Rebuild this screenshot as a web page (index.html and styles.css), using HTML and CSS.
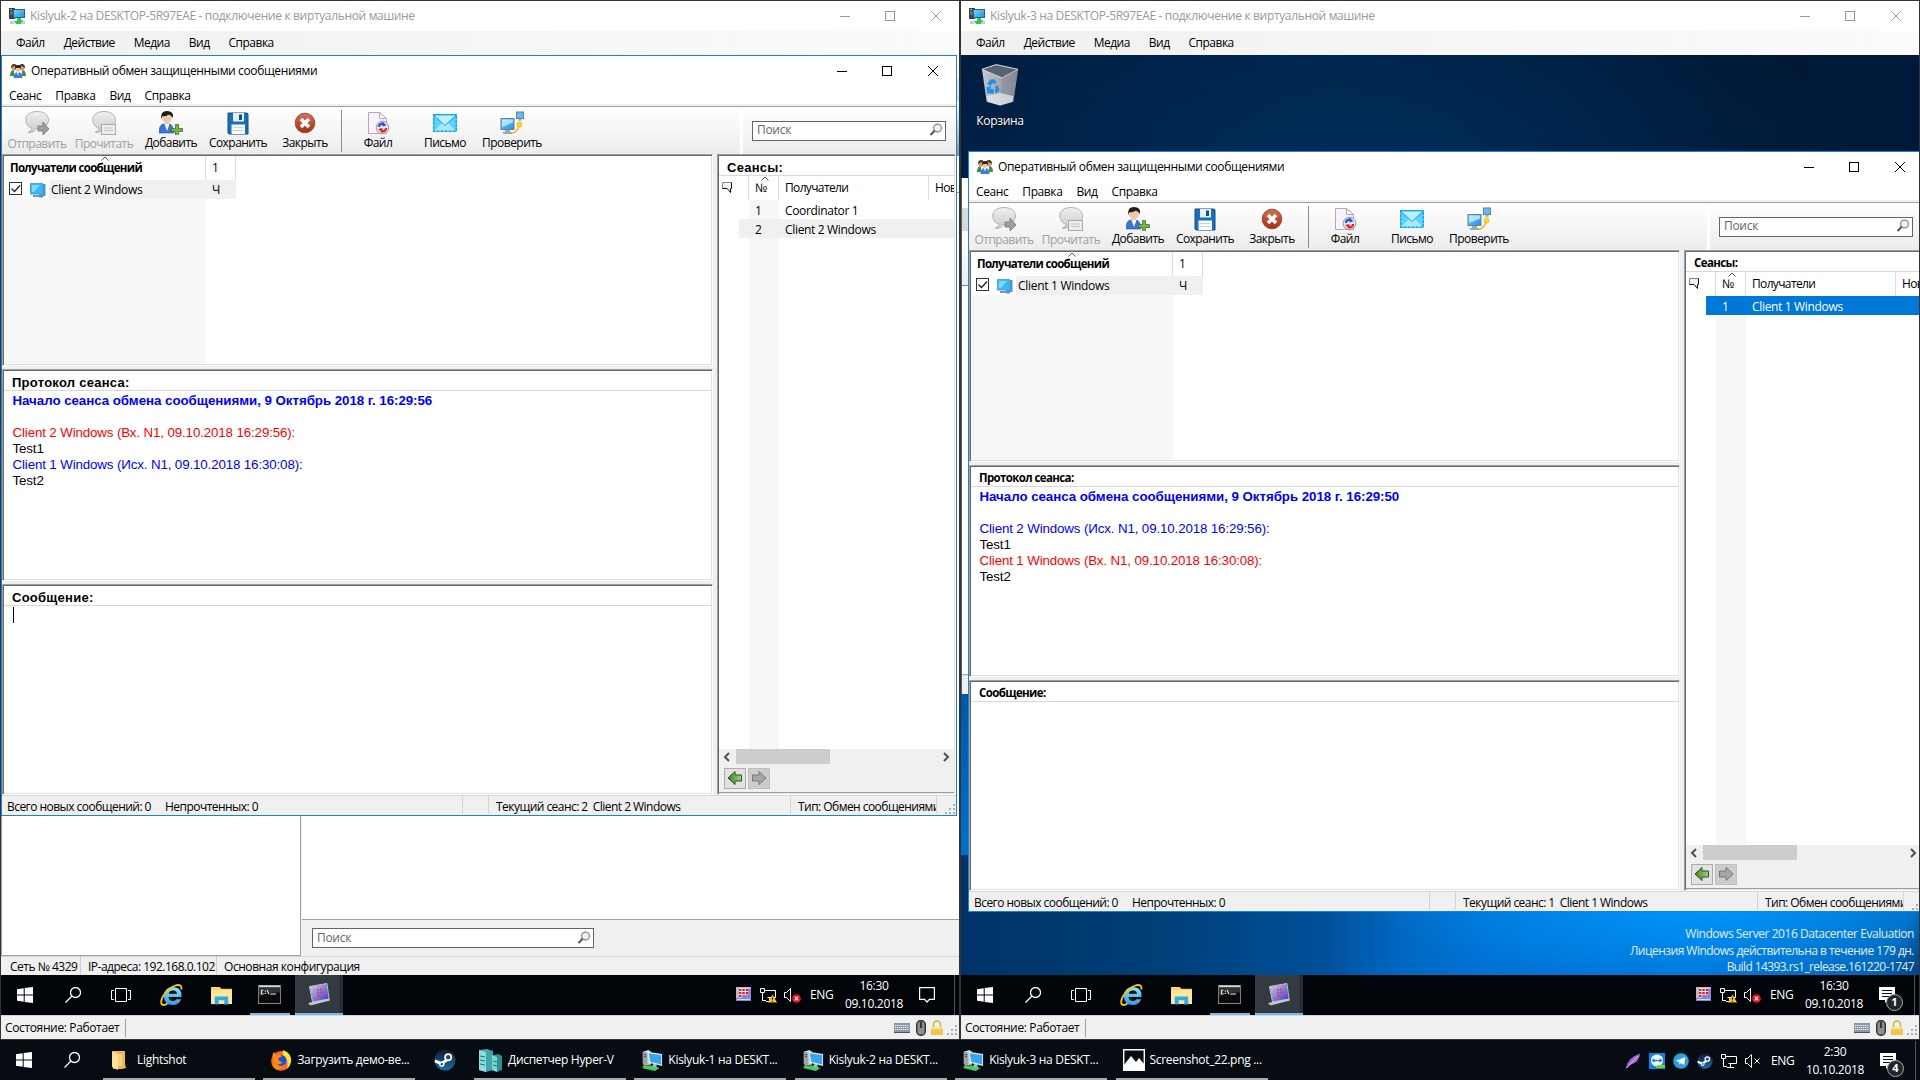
FILE: index.html
```html
<!DOCTYPE html>
<html lang="ru">
<head>
<meta charset="utf-8">
<title>Kislyuk-2, Kislyuk-3</title>
<link rel="stylesheet" href="styles.css">
</head>
<body>
<svg class="defs" aria-hidden="true">
  <defs>
    <linearGradient id="g-screen" x1="0" y1="0" x2="1" y2="1"><stop offset="0" stop-color="#7fd4fb"/><stop offset="1" stop-color="#1f8fdc"/></linearGradient>
    <linearGradient id="g-purple" x1="0" y1="0" x2="1" y2="1"><stop offset="0" stop-color="#d4d4ee"/><stop offset="1" stop-color="#3a2fc0"/></linearGradient>
    <linearGradient id="g-grey" x1="0" y1="0" x2="0" y2="1"><stop offset="0" stop-color="#f0f0f0"/><stop offset="1" stop-color="#c9c9c9"/></linearGradient>
    <linearGradient id="g-ie" x1="0" y1="0" x2="0" y2="1"><stop offset="0" stop-color="#8be0fb"/><stop offset="1" stop-color="#2b9fe0"/></linearGradient>
    <linearGradient id="g-fox" x1="0" y1="0" x2="1" y2="1"><stop offset="0" stop-color="#ff3b30"/><stop offset=".55" stop-color="#ff9500"/><stop offset="1" stop-color="#ff2a6d"/></linearGradient>
    <linearGradient id="g-steam" x1="0" y1="0" x2="0" y2="1"><stop offset="0" stop-color="#10182c"/><stop offset="1" stop-color="#1a6fae"/></linearGradient>
    <linearGradient id="g-red" x1="0" y1="0" x2="0" y2="1"><stop offset="0" stop-color="#d9705a"/><stop offset="1" stop-color="#a3300f"/></linearGradient>
    <linearGradient id="g-green" x1="0" y1="0" x2="1" y2="0"><stop offset="0" stop-color="#3f7f22"/><stop offset="1" stop-color="#a9d08c"/></linearGradient>
    <linearGradient id="g-bin" x1="0" y1="0" x2="1" y2="0"><stop offset="0" stop-color="#c3c9d0"/><stop offset=".6" stop-color="#9aa1aa"/><stop offset="1" stop-color="#6f7883"/></linearGradient>
  </defs>
  <symbol id="i-vm" viewBox="0 0 16 16"><rect x="0" y="0" width="6" height="11" fill="#39434c"/><rect x="1" y="1" width="2" height="1" fill="#5fe05f"/><path d="M1 4h4M1 6h4" stroke="#8b959c"/><rect x="4.500" y="1.500" width="11" height="8" fill="url(#g-screen)" stroke="#2a5f8c"/><path d="M8 10h4v2h2l-2 4H7l-2-3h3z" fill="#2fc552"/><path d="M1 13h4v3H1zM13 13h3v3h-3z" fill="#c7cbcf"/></symbol>
  <symbol id="i-vmbig" viewBox="0 0 24 24"><path d="M2 3l6-2 3 2v14l-7 1-2-2z" fill="#d3d6d8"/><path d="M2 3l5 1v14l-5-2z" fill="#9ca1a5"/><path d="M3.500 6l2 .5M3.500 8l2 .5" stroke="#333"/><path d="M2 18l12 0 6 3-5 3-13-3z" fill="#43d060"/><path d="M13 15l4 1v4h-4z" fill="#b0b7bb"/><path d="M7 3l16 2.500v13L9 15z" fill="#e4edf2"/><path d="M8.500 4.500l13.500 2v10.500L10 14z" fill="#35a7f2"/></symbol>
  <symbol id="i-people" viewBox="0 0 16 16"><path d="M0 13q0-6 4-6v6zM16 13q0-6-4-6v6z" fill="#3f8f45"/><circle cx="3.800" cy="4.800" r="2.600" fill="#d49a72"/><circle cx="12.200" cy="4.800" r="2.600" fill="#d49a72"/><path d="M1 5q0-4 3-4t3 3L4 3zM15 5q0-4-3-4T9 4l3-1z" fill="#4a3524"/><circle cx="8" cy="6" r="2.800" fill="#efc09c"/><path d="M5 6.500Q4.500 2 8 2t3 4.500L10 5H6z" fill="#2b2622"/><path d="M3.500 15q0-6 4.500-6t4.500 6z" fill="#3b7ddb"/><path d="M7 9h2l-1 4z" fill="#fff"/></symbol>
  <symbol id="i-send" viewBox="0 0 24 24"><path d="M12 .5C5 .500 .800 4 .800 8.500S3 16 7 17q0 3-4 4.500Q9 22 11 17.500C19 18 23.500 14 23.500 9S19 .500 12 .500z" fill="url(#g-grey)" stroke="#b2b2b2"/><path d="M13 15h5v-4l6 7-6 6v-4h-5z" fill="#9d9d9d" stroke="#858585"/></symbol>
  <symbol id="i-read" viewBox="0 0 24 24"><path d="M12 .5C5 .500 .800 4 .800 8.500S3 16 7 17q0 3-4 4.500Q9 22 11 17.500C19 18 23.500 14 23.500 9S19 .500 12 .500z" fill="url(#g-grey)" stroke="#b2b2b2"/><rect x="9.500" y="13.500" width="14" height="10" fill="#eee" stroke="#a9a9a9"/><path d="M12 17h9M12 19.500h9" stroke="#c4c4c4"/></symbol>
  <symbol id="i-add" viewBox="0 0 24 24"><path d="M0 22q0-9 5-9h5q4 0 5 9z" fill="#3c74d6" stroke="#2454a8" stroke-width=".6"/><path d="M5.500 13h5L8 20z" fill="#fff"/><circle cx="8" cy="7" r="4.800" fill="#f1c6a4"/><path d="M2.500 8Q1 0 8 0t6 7q-1-2-4-3.500Q6 6 3.500 5z" fill="#1e1c1e"/><path d="M16.500 13.500h3v4h4v3h-4v4h-3v-4h-4v-3h4z" fill="#78b44c" stroke="#3f7424" stroke-width=".8"/></symbol>
  <symbol id="i-save" viewBox="0 0 24 24"><path d="M2 2h19l1 1v20H3l-1-1z" fill="#1a70b8" stroke="#0c4d87"/><rect x="7" y="2" width="11" height="8.500" fill="#e2f2fa"/><rect x="13" y="3.500" width="3" height="5.500" fill="#164f86"/><rect x="5.500" y="13.500" width="13.500" height="9.500" fill="#f6fafc"/><path d="M7.500 16.500h9.500M7.500 19.500h9.500" stroke="#c2d4df"/></symbol>
  <symbol id="i-close" viewBox="0 0 24 24"><circle cx="12" cy="12" r="9.800" fill="url(#g-red)" stroke="#9a4a35"/><path d="M8 8l8 8M16 8l-8 8" stroke="#fff" stroke-width="3.600"/></symbol>
  <symbol id="i-file" viewBox="0 0 24 24"><path d="M2.500 1.500h11l7 6v15h-18z" fill="#f6f4f8" stroke="#b7a6bc"/><path d="M13.500 1.500v6h7z" fill="#fff" stroke="#b7a6bc"/><circle cx="16.500" cy="16.500" r="6.300" fill="#e9ecef" stroke="#8f9aa3"/><path d="M13 16q0-4 5-3" stroke="#1d56d6" stroke-width="2.400" fill="none"/><path d="M16.500 10.500v5l4-1z" fill="#1d56d6"/><path d="M20 17q0 4-5 3" stroke="#e3271d" stroke-width="2.400" fill="none"/><path d="M16.500 22v-5l-4.500 1z" fill="#e3271d"/></symbol>
  <symbol id="i-mail" viewBox="0 0 24 24"><rect x="0" y="3" width="24" height="18" fill="#5ed2fb"/><path d="M0 21l9-9h6l9 9z" fill="#a3e9ff"/><path d="M0 3.500h24L12 14.500z" fill="#bdf0ff" stroke="#159fe0"/><rect x=".7" y="3.700" width="22.600" height="16.600" fill="none" stroke="#12a6ee" stroke-width="1.400" stroke-dasharray="3 1"/></symbol>
  <symbol id="i-check" viewBox="0 0 24 24"><rect x="1" y="7.500" width="13" height="11" fill="url(#g-screen)" stroke="#64809a"/><path d="M2 8.500h11v3L2 16z" fill="#d7f1fd" opacity=".7"/><path d="M5 19h5v2h2v2H3v-2h2z" fill="#9aa9b6"/><rect x="16.500" y="1" width="7" height="6.500" fill="#66b8ef" stroke="#64809a"/><path d="M18 9h4M20 7.500v2" stroke="#8797a3"/><path d="M11 22.500q7-1 8-9" stroke="#f5b418" stroke-width="1.600" fill="none"/><circle cx="19.500" cy="13.500" r="2.500" fill="#ffd91a" stroke="#e0a010" stroke-width=".6"/></symbol>
  <symbol id="i-lens" viewBox="0 0 14 14"><circle cx="8.500" cy="5" r="3.900" fill="#eef3f6" stroke="#8a8a8a" stroke-width="1.300"/><path d="M5.600 7.800L1.500 12" stroke="#555" stroke-width="2"/></symbol>
  <symbol id="i-client" viewBox="0 0 16 16"><path d="M3 2h12.500v12H13v1.500H9V13z" fill="#4b93d5"/><rect x=".5" y="1.500" width="12" height="10.500" fill="#38b8f5" stroke="#4fa6d8"/><path d="M2 3h8L4 10H2z" fill="#7bd8fd"/><path d="M3 13h7v2H3z" fill="#6e9cc4"/></symbol>
  <symbol id="i-bubble" viewBox="0 0 12 12"><path d="M2 .5h8.500v6h-1v4l-3.500-4H1.500v-5z" fill="#f2f2f2" stroke="#111"/><path d="M1.500 6V1.500L2.500.5H10" stroke="#888" fill="none"/></symbol>
  <symbol id="i-caret" viewBox="0 0 8 5"><path d="M.5 4.500L4 1l3.500 3.500" stroke="#555" fill="none"/></symbol>
  <symbol id="i-sbl" viewBox="0 0 8 10"><path d="M6 1L2 5l4 4" stroke="#505050" stroke-width="2" fill="none"/></symbol>
  <symbol id="i-sbr" viewBox="0 0 8 10"><path d="M2 1l4 4-4 4" stroke="#505050" stroke-width="2" fill="none"/></symbol>
  <symbol id="i-prev" viewBox="0 0 16 16"><path d="M1 8l7-6.500V5h6.500v6H8v3.500z" fill="url(#g-green)" stroke="#285214"/></symbol>
  <symbol id="i-next" viewBox="0 0 16 16"><path d="M15 8L8 1.500V5H1.500v6H8v3.500z" fill="#a6a6a6" stroke="#787878"/></symbol>
  <symbol id="i-min" viewBox="0 0 12 12"><path d="M1 6.500h10" stroke="currentColor"/></symbol>
  <symbol id="i-max" viewBox="0 0 12 12"><rect x="1.500" y="1.500" width="9" height="9" stroke="currentColor" fill="none"/></symbol>
  <symbol id="i-x" viewBox="0 0 12 12"><path d="M1 1l10 10M11 1L1 11" stroke="currentColor"/></symbol>
  <symbol id="i-start" viewBox="0 0 16 16"><path d="M0 2.200L6.700 1.300V7.500H0zM7.700 1.100L16 0v7.500H7.700zM0 8.500h6.700v6.200L0 13.800zM7.700 8.500H16V16l-8.300-1.100z" fill="#fff"/></symbol>
  <symbol id="i-search" viewBox="0 0 16 16"><circle cx="10.500" cy="5.500" r="5" stroke="#fff" stroke-width="1.300" fill="none"/><path d="M7 9L.500 15.500" stroke="#fff" stroke-width="1.300"/></symbol>
  <symbol id="i-task" viewBox="0 0 20 14"><path d="M4.500.500h11v13h-11zM3 2.500H.500v9H3M17 2.500h2.500v9H17" stroke="#fff" fill="none" stroke-width="1"/></symbol>
  <symbol id="i-ie" viewBox="0 0 24 24"><path d="M21.500 14H8.500q.5 4 4.500 4 2.500 0 3.500-1.800h4.700Q19 22 12.800 22 4 22 4 13.500 4 4 13 4q9 0 8.500 10zM8.700 10.800h8.200Q16.500 7.600 13 7.600t-4.300 3.200z" fill="url(#g-ie)"/><path d="M21.500 6.500Q22 1 16.500 2.200C8 4.500 .5 14.500 1.300 20c.6 3 4 2 6.200.5" stroke="#f4c11c" stroke-width="1.900" fill="none"/></symbol>
  <symbol id="i-folder" viewBox="0 0 24 20"><path d="M1 1h9l2 2h11v16H1z" fill="#f6d36b"/><path d="M1 4.500h22V19H1z" fill="#ffe79a"/><path d="M5 11h14v8.500h-4V15H9v4.500H5z" fill="#2fa9ea"/></symbol>
  <symbol id="i-cmd" viewBox="0 0 24 20"><rect x=".5" y=".5" width="23" height="19" fill="#0a0a0a" stroke="#8b8b8b"/><path d="M1 1.500h22" stroke="#d9d9d9" stroke-width="2"/><path d="M1 3h22v5Q12 7 1 12z" fill="#333"/><path d="M5.500 5.500h-2v4h2M7.500 6v1M7.500 8.500v1M9.500 5l2 5M13 9.500h6" stroke="#fff" fill="none"/></symbol>
  <symbol id="i-vip" viewBox="0 0 24 24"><path d="M2.500 4.500L20 1.500 22 17 5.500 20z" fill="url(#g-purple)" stroke="#b9b9c9"/><path d="M1 21l21.500-4.500 .5 2L3.500 23.500z" fill="#c3c5cd"/><path d="M10 8l6-1M10 11l7-1M11 14l3-.5" stroke="#f0344a" stroke-width="1.600" stroke-dasharray="2 1"/></symbol>
  <symbol id="i-viptray" viewBox="0 0 15 14"><rect width="15" height="14" fill="#8d86d8"/><path d="M0 0h15v2H3v9H0z" fill="#b9b9cf"/><path d="M3 1.500h9v6H6v3H3z" fill="#fff"/><path d="M3 3h9M3 6h9M3 9h3" stroke="#f01818" stroke-width="2.200" stroke-dasharray="2.400 .9"/><path d="M1 12.500h13" stroke="#d7d7ec"/></symbol>
  <symbol id="i-net" viewBox="0 0 16 16"><path d="M4.500 3.500h11v7h-8M9.500 11v3M6 14.500h7M.500 1.500h4v4h-4zM2.500 5.500v8H6" stroke="#fff" fill="none"/></symbol>
  <symbol id="i-warn" viewBox="0 0 10 9"><path d="M5 0l5 9H0z" fill="#ffc20e"/><path d="M5 3v3M5 7v1" stroke="#222" stroke-width="1.200"/></symbol>
  <symbol id="i-snd" viewBox="0 0 16 16"><path d="M.500 5.500h2l4-4v13l-4-4h-2z" stroke="#fff" fill="none"/></symbol>
  <symbol id="i-redx" viewBox="0 0 10 10"><circle cx="5" cy="5" r="4.800" fill="#e81123"/><path d="M3 3l4 4M7 3L3 7" stroke="#fff" stroke-width="1.200"/></symbol>
  <symbol id="i-note" viewBox="0 0 16 16"><path d="M.600.600h14.800v11.800h-5L8 15l-2.400-2.600h-5z" stroke="#fff" stroke-width="1.200" fill="none"/></symbol>
  <symbol id="i-notef" viewBox="0 0 16 16"><path d="M0 0h16v13h-7L6 16v-3H0z" fill="#fff"/><path d="M3 3.500h10M3 6.500h10M3 9.500h7" stroke="#0b1018"/></symbol>
  <symbol id="i-kbd" viewBox="0 0 16 10"><rect width="16" height="10" fill="#8d9aa5"/><path d="M1 2.500h14M1 4.500h14M1 6.500h14" stroke="#e8eef2" stroke-dasharray="1.300 .7"/><path d="M0 9.500h16" stroke="#4a5560"/></symbol>
  <symbol id="i-mouse" viewBox="0 0 10 16"><rect x=".7" y=".7" width="8.600" height="14.600" rx="4" fill="#8f8f8f" stroke="#2e2e2e" stroke-width="1.400"/><path d="M5 2v6" stroke="#1d1d1d" stroke-width="1.600"/></symbol>
  <symbol id="i-lock" viewBox="0 0 12 15"><path d="M2.500 8V4.500a3.500 3.500 0 0 1 7 0V8" stroke="#d8b964" stroke-width="1.800" fill="none"/><rect y="7" width="12" height="8" fill="#f3c64d"/><path d="M0 8h12" stroke="#fbe39a" stroke-width="2"/></symbol>
  <symbol id="i-grip" viewBox="0 0 12 12"><path d="M9 1h2v2H9zM5 5h2v2H5zM9 5h2v2H9zM1 9h2v2H1zM5 9h2v2H5zM9 9h2v2H9z" fill="#b0b0b0"/></symbol>
  <symbol id="i-bin" viewBox="0 0 40 44"><path d="M1 5L16 0l23 5-5 34-14 4-14-4z" fill="url(#g-bin)"/><path d="M1 5L16 0l23 5-17 9z" fill="#59636f" stroke="#d9dee3"/><path d="M22 14l-2 29 14-4 5-34z" fill="#8a929d" opacity=".7"/><path d="M6 33l14-3 14 3-1 6-13 4-13-4z" fill="#e6e8ea" opacity=".75"/><path d="M7 20l3-4h4l2 3-3 1-1-1-2 3zM17 22l2 5-3 3-1-3 1-1-1-2zM6 24l1 6h6v-4H9l1-3z" fill="#1f8fe8" stroke="#1f8fe8" stroke-width=".8"/></symbol>
  <symbol id="i-fold2" viewBox="0 0 14 20"><path d="M1 1h12v13l1 4-4 1H1z" fill="#e9bb57"/><path d="M0 1l6 3v16l-6-3z" fill="#ffe096"/><path d="M6 4h4v12H6z" fill="#f6cf77"/></symbol>
  <symbol id="i-fox" viewBox="0 0 24 24"><circle cx="12" cy="13" r="10.800" fill="url(#g-fox)"/><path d="M14 1q10 3 9 13-1 5-5 8 4-10-4-15z" fill="#ffdf3a"/><circle cx="12" cy="12.500" r="6" fill="#1d4fd0"/><path d="M4 3l3 4q4-2 6 1l-4 2q0 4 5 4-4 5-9 1Q1 9 4 3z" fill="#ff8a16"/></symbol>
  <symbol id="i-steam" viewBox="0 0 24 24"><circle cx="12" cy="12" r="11.500" fill="url(#g-steam)"/><path d="M1 13l7 3 6-4" stroke="#fff" stroke-width="3.200" fill="none"/><circle cx="15.500" cy="9" r="4.300" fill="#fff"/><circle cx="15.500" cy="9" r="2.400" fill="#23456c"/><circle cx="8.500" cy="16.500" r="2.900" fill="#fff"/><circle cx="8.500" cy="16.500" r="1.400" fill="#2a6c9f"/></symbol>
  <symbol id="i-hv" viewBox="0 0 24 24"><path d="M0 2l8-1 6 2v19l-7 2-7-2z" fill="#3fa6ab"/><path d="M0 2l7 2v20l-7-2z" fill="#8fdcdf"/><path d="M14 7l5-1 4 2v14l-5 2-5-2z" fill="#2f8f96"/><path d="M13 7l5 2v15l-5-2z" fill="#7dd3d6"/><path d="M1 8l5 1M1 12l5 1M1 16l5 1M14 13l4 1M14 17l4 1" stroke="#1f7077"/></symbol>
  <symbol id="i-pic" viewBox="0 0 22 22"><path d="M.700.700h20.600v20.600H.700z" fill="#070b12" stroke="#fff" stroke-width="1.400"/><path d="M1 16l7-9 5 6 3-4 5 6v6H1z" fill="#fff"/></symbol>
  <symbol id="i-quill" viewBox="0 0 16 16"><path d="M1 15Q2 5 15 .500 15 9 5 12z" fill="#a05fd0"/><path d="M1 15.500L13 3" stroke="#e3c8f7" fill="none"/></symbol>
  <symbol id="i-tv" viewBox="0 0 16 16"><rect width="16" height="16" fill="#1283e6"/><circle cx="8" cy="7.500" r="6" fill="#fff"/><path d="M2.500 7.500L5.500 5v1.700h5V5l3 2.500-3 2.500V8.300h-5V10z" fill="#1283e6"/><path d="M8 12h8v3H7z" fill="#7ed321"/></symbol>
  <symbol id="i-tg" viewBox="0 0 16 16"><circle cx="8" cy="8" r="7.800" fill="#2ca3dd"/><path d="M3 7.800L12.500 4 11 12 8 10l-1.500 1.500L6 9z" fill="#fff"/></symbol>
</svg>

<div class="screen">
  <main class="vms">

    <section class="vm">
      <header class="vm-title"><svg class="s16"><use href="#i-vm"/></svg><span class="vm-name">Kislyuk-2 на DESKTOP-5R97EAE - подключение к виртуальной машине</span><span class="caption"><svg><use href="#i-min"/></svg><svg class="mx"><use href="#i-max"/></svg><svg><use href="#i-x"/></svg></span></header>
      <nav class="vm-menu"><span>Файл</span><span>Действие</span><span>Медиа</span><span>Вид</span><span>Справка</span></nav>
      <div class="desktop monitor">
        <div class="mon-main">
          <div class="mon-tree"></div>
          <div class="mon-right">
            <div class="mon-list"></div>
            <div class="mon-find"><div class="search wide"><span>Поиск</span><svg><use href="#i-lens"/></svg></div></div>
          </div>
        </div>
        <div class="mon-status"><span class="n1">Сеть № 4329</span><span class="n2">IP-адреса: 192.168.0.102</span><span class="n3">Основная конфигурация</span></div>

        <article class="app app-left">
          <header class="app-title"><svg class="s16"><use href="#i-people"/></svg><span class="app-name">Оперативный обмен защищенными сообщениями</span><span class="caption"><svg><use href="#i-min"/></svg><svg class="mx"><use href="#i-max"/></svg><svg><use href="#i-x"/></svg></span></header>
          <nav class="app-menu"><span>Сеанс</span><span>Правка</span><span>Вид</span><span>Справка</span></nav>
          <div class="toolbar">
            <div class="tools">
              <div class="tool off"><svg><use href="#i-send"/></svg><span>Отправить</span></div>
              <div class="tool off"><svg><use href="#i-read"/></svg><span>Прочитать</span></div>
              <div class="tool"><svg><use href="#i-add"/></svg><span>Добавить</span></div>
              <div class="tool"><svg><use href="#i-save"/></svg><span>Сохранить</span></div>
              <div class="tool"><svg><use href="#i-close"/></svg><span>Закрыть</span></div>
              <i class="tool-sep"></i>
              <div class="tool"><svg><use href="#i-file"/></svg><span>Файл</span></div>
              <div class="tool"><svg><use href="#i-mail"/></svg><span>Письмо</span></div>
              <div class="tool"><svg><use href="#i-check"/></svg><span>Проверить</span></div>
            </div>
            <div class="find"><div class="search"><span>Поиск</span><svg><use href="#i-lens"/></svg></div></div>
          </div>
          <div class="panes">
            <div class="col-left">
              <section class="box recipients">
                <div class="rc-head"><span class="rc-name">Получатели сообщений<svg class="caret"><use href="#i-caret"/></svg></span><span class="rc-num">1</span></div>
                <div class="rc-row"><span class="chk"><svg viewBox="0 0 13 13"><path d="M2.500 6.500l3 3 5.500-6" stroke="#222" stroke-width="1.300" fill="none"/></svg></span><svg class="s16"><use href="#i-client"/></svg><span class="rc-client">Client 2 Windows</span><span class="rc-flag">Ч</span></div>
                <div class="rc-fill"></div>
              </section>
              <section class="box log">
                <h2>Протокол сеанса:</h2>
                <p class="start">Начало сеанса обмена сообщениями, 9 Октябрь 2018 г. 16:29:56</p>
                <p>&nbsp;</p>
                <p class="in">Client 2 Windows (Вх. N1, 09.10.2018 16:29:56):</p>
                <p>Test1</p>
                <p class="out">Client 1 Windows (Исх. N1, 09.10.2018 16:30:08):</p>
                <p>Test2</p>
              </section>
              <section class="box message">
                <h2>Сообщение:</h2>
                <i class="cursor"></i>
              </section>
            </div>
            <section class="box sessions">
              <h2>Сеансы:</h2>
              <div class="ss-head"><span class="c0"><svg><use href="#i-bubble"/></svg></span><span class="c1">№<svg class="caret"><use href="#i-caret"/></svg></span><span class="c2">Получатели</span><span class="c3">Новых</span></div>
              <div class="ss-list">
                <div class="ss-row"><span>1</span><span>Coordinator 1</span></div>
                <div class="ss-row cur"><span>2</span><span>Client 2 Windows</span></div>
              </div>
              <div class="hscroll"><svg><use href="#i-sbl"/></svg><i class="thumb"></i><svg class="end"><use href="#i-sbr"/></svg></div>
              <div class="pager"><span class="pg"><svg class="s16"><use href="#i-prev"/></svg></span><span class="pg dis"><svg class="s16"><use href="#i-next"/></svg></span></div>
            </section>
          </div>
          <footer class="app-status"><span class="a1">Всего новых сообщений: 0</span><span class="a2">Непрочтенных: 0</span><span class="a3"></span><span class="a4">Текущий сеанс: 2&nbsp; Client 2 Windows</span><span class="a5">Тип: Обмен сообщениями</span><svg class="grip"><use href="#i-grip"/></svg></footer>
        </article>
      </div>
      <div class="taskbar guest">
        <span class="tb"><svg class="s16"><use href="#i-start"/></svg></span><span class="tb"><svg class="s16"><use href="#i-search"/></svg></span><span class="tb"><svg class="tv"><use href="#i-task"/></svg></span><span class="tb ie"><svg class="s24"><use href="#i-ie"/></svg></span><span class="tb ex"><svg class="w22"><use href="#i-folder"/></svg></span><span class="tb run"><svg class="w22"><use href="#i-cmd"/></svg></span><span class="tb act"><svg class="s24"><use href="#i-vip"/></svg></span>
        <div class="tray"><svg class="viptray"><use href="#i-viptray"/></svg><span class="ov"><svg class="s16"><use href="#i-net"/></svg><svg class="badge"><use href="#i-warn"/></svg></span><span class="ov"><svg class="s16"><use href="#i-snd"/></svg><svg class="badge"><use href="#i-redx"/></svg></span><span class="lang">ENG</span><span class="clock">16:30<br>09.10.2018</span><span class="ov nt"><svg class="s16"><use href="#i-note"/></svg></span><i class="peek"></i></div>
      </div>
      <footer class="vm-status"><span>Состояние: Работает</span><div class="vm-icons"><svg class="kbd"><use href="#i-kbd"/></svg><svg class="mouse"><use href="#i-mouse"/></svg><svg class="lock"><use href="#i-lock"/></svg><svg class="grip"><use href="#i-grip"/></svg></div></footer>
    </section>

    <section class="vm">
      <header class="vm-title"><svg class="s16"><use href="#i-vm"/></svg><span class="vm-name">Kislyuk-3 на DESKTOP-5R97EAE - подключение к виртуальной машине</span><span class="caption"><svg><use href="#i-min"/></svg><svg class="mx"><use href="#i-max"/></svg><svg><use href="#i-x"/></svg></span></header>
      <nav class="vm-menu"><span>Файл</span><span>Действие</span><span>Медиа</span><span>Вид</span><span>Справка</span></nav>
      <div class="desktop wallpaper">
        <div class="bin"><svg><use href="#i-bin"/></svg><span>Корзина</span></div>
        <div class="behind"></div>
        <div class="watermark"><span class="w1">Windows Server 2016 Datacenter Evaluation</span><span class="w2">Лицензия Windows действительна в течение 179 дн.</span><span class="w3">Build 14393.rs1_release.161220-1747</span></div>

        <article class="app app-right">
          <header class="app-title"><svg class="s16"><use href="#i-people"/></svg><span class="app-name">Оперативный обмен защищенными сообщениями</span><span class="caption"><svg><use href="#i-min"/></svg><svg class="mx"><use href="#i-max"/></svg><svg><use href="#i-x"/></svg></span></header>
          <nav class="app-menu"><span>Сеанс</span><span>Правка</span><span>Вид</span><span>Справка</span></nav>
          <div class="toolbar">
            <div class="tools">
              <div class="tool off"><svg><use href="#i-send"/></svg><span>Отправить</span></div>
              <div class="tool off"><svg><use href="#i-read"/></svg><span>Прочитать</span></div>
              <div class="tool"><svg><use href="#i-add"/></svg><span>Добавить</span></div>
              <div class="tool"><svg><use href="#i-save"/></svg><span>Сохранить</span></div>
              <div class="tool"><svg><use href="#i-close"/></svg><span>Закрыть</span></div>
              <i class="tool-sep"></i>
              <div class="tool"><svg><use href="#i-file"/></svg><span>Файл</span></div>
              <div class="tool"><svg><use href="#i-mail"/></svg><span>Письмо</span></div>
              <div class="tool"><svg><use href="#i-check"/></svg><span>Проверить</span></div>
            </div>
            <div class="find"><div class="search"><span>Поиск</span><svg><use href="#i-lens"/></svg></div></div>
          </div>
          <div class="panes">
            <div class="col-left">
              <section class="box recipients">
                <div class="rc-head"><span class="rc-name">Получатели сообщений<svg class="caret"><use href="#i-caret"/></svg></span><span class="rc-num">1</span></div>
                <div class="rc-row"><span class="chk"><svg viewBox="0 0 13 13"><path d="M2.500 6.500l3 3 5.500-6" stroke="#222" stroke-width="1.300" fill="none"/></svg></span><svg class="s16"><use href="#i-client"/></svg><span class="rc-client">Client 1 Windows</span><span class="rc-flag">Ч</span></div>
                <div class="rc-fill"></div>
              </section>
              <section class="box log">
                <h2>Протокол сеанса:</h2>
                <p class="start">Начало сеанса обмена сообщениями, 9 Октябрь 2018 г. 16:29:50</p>
                <p>&nbsp;</p>
                <p class="out">Client 2 Windows (Исх. N1, 09.10.2018 16:29:56):</p>
                <p>Test1</p>
                <p class="in">Client 1 Windows (Вх. N1, 09.10.2018 16:30:08):</p>
                <p>Test2</p>
              </section>
              <section class="box message">
                <h2>Сообщение:</h2>
              </section>
            </div>
            <section class="box sessions">
              <h2>Сеансы:</h2>
              <div class="ss-head"><span class="c0"><svg><use href="#i-bubble"/></svg></span><span class="c1">№<svg class="caret"><use href="#i-caret"/></svg></span><span class="c2">Получатели</span><span class="c3">Новых</span></div>
              <div class="ss-list">
                <div class="ss-row sel"><span>1</span><span>Client 1 Windows</span></div>
              </div>
              <div class="hscroll"><svg><use href="#i-sbl"/></svg><i class="thumb"></i><svg class="end"><use href="#i-sbr"/></svg></div>
              <div class="pager"><span class="pg"><svg class="s16"><use href="#i-prev"/></svg></span><span class="pg dis"><svg class="s16"><use href="#i-next"/></svg></span></div>
            </section>
          </div>
          <footer class="app-status"><span class="a1">Всего новых сообщений: 0</span><span class="a2">Непрочтенных: 0</span><span class="a3"></span><span class="a4">Текущий сеанс: 1&nbsp; Client 1 Windows</span><span class="a5">Тип: Обмен сообщениями</span><svg class="grip"><use href="#i-grip"/></svg></footer>
        </article>
      </div>
      <div class="taskbar guest">
        <span class="tb"><svg class="s16"><use href="#i-start"/></svg></span><span class="tb"><svg class="s16"><use href="#i-search"/></svg></span><span class="tb"><svg class="tv"><use href="#i-task"/></svg></span><span class="tb ie"><svg class="s24"><use href="#i-ie"/></svg></span><span class="tb ex"><svg class="w22"><use href="#i-folder"/></svg></span><span class="tb run"><svg class="w22"><use href="#i-cmd"/></svg></span><span class="tb act"><svg class="s24"><use href="#i-vip"/></svg></span>
        <div class="tray"><svg class="viptray"><use href="#i-viptray"/></svg><span class="ov"><svg class="s16"><use href="#i-net"/></svg><svg class="badge"><use href="#i-warn"/></svg></span><span class="ov"><svg class="s16"><use href="#i-snd"/></svg><svg class="badge"><use href="#i-redx"/></svg></span><span class="lang">ENG</span><span class="clock">16:30<br>09.10.2018</span><span class="ov nt"><svg class="s16"><use href="#i-notef"/></svg><b class="count">1</b></span><i class="peek"></i></div>
      </div>
      <footer class="vm-status"><span>Состояние: Работает</span><div class="vm-icons"><svg class="kbd"><use href="#i-kbd"/></svg><svg class="mouse"><use href="#i-mouse"/></svg><svg class="lock"><use href="#i-lock"/></svg><svg class="grip"><use href="#i-grip"/></svg></div></footer>
    </section>
  </main>

  <div class="taskbar host">
    <span class="tb"><svg class="s16"><use href="#i-start"/></svg></span><span class="tb"><svg class="s16"><use href="#i-search"/></svg></span>
    <div class="tasks">
      <div class="task t-folder"><svg><use href="#i-fold2"/></svg><span>Lightshot</span></div>
      <div class="task"><svg><use href="#i-fox"/></svg><span>Загрузить демо-ве...</span></div>
      <div class="pin"><svg><use href="#i-steam"/></svg></div>
      <div class="task hv"><svg><use href="#i-hv"/></svg><span>Диспетчер Hyper-V</span></div>
      <div class="task"><svg><use href="#i-vmbig"/></svg><span>Kislyuk-1 на DESKT...</span></div>
      <div class="task"><svg><use href="#i-vmbig"/></svg><span>Kislyuk-2 на DESKT...</span></div>
      <div class="task"><svg><use href="#i-vmbig"/></svg><span>Kislyuk-3 на DESKT...</span></div>
      <div class="task"><svg><use href="#i-pic"/></svg><span>Screenshot_22.png ...</span></div>
    </div>
    <div class="tray"><svg class="s16"><use href="#i-quill"/></svg><svg class="s16"><use href="#i-tv"/></svg><svg class="s16"><use href="#i-tg"/></svg><svg class="s16"><use href="#i-steam"/></svg><svg class="s16"><use href="#i-net"/></svg><span class="ov"><svg class="s16"><use href="#i-snd"/></svg><svg class="mute" viewBox="0 0 6 6"><path d="M.500.500l5 5M5.500.500l-5 5" stroke="#fff"/></svg></span><span class="lang">ENG</span><span class="clock">2:30<br>10.10.2018</span><span class="ov nt"><svg class="s16"><use href="#i-notef"/></svg><b class="count">4</b></span><i class="peek"></i></div>
  </div>
</div>
</body>
</html>
```
FILE: styles.css
```css
* { box-sizing: border-box; }
html, body { margin: 0; height: 100%; }
body {
  font: 12px/16px "Open Sans", "Noto Sans", sans-serif;
  letter-spacing: -0.3px;
  color: #000;
  background: #070b12;
  overflow: hidden;
}
svg { display: block; flex: none; }
h2, p { margin: 0; }
.defs { position: absolute; width: 0; height: 0; }
.s16 { width: 16px; height: 16px; }
.s24 { width: 24px; height: 24px; }
.w22 { width: 23px; height: 19px; }
.tv { width: 20px; height: 14px; }

.screen { width: 1920px; height: 1080px; display: flex; flex-direction: column; }
.vms { display: flex; height: 1040px; }

/* Virtual machine window */
.vm { width: 960px; height: 1040px; border: 1px solid #333338; display: flex; flex-direction: column; background: #fff; overflow: hidden; }
.vm-title { height: 30px; display: flex; align-items: center; gap: 5px; padding: 0 17px 0 8px; color: #999; }
.vm-name { letter-spacing: -0.34px; white-space: nowrap; }
.caption { margin-left: auto; display: flex; gap: 34px; }
.caption svg { width: 12px; height: 12px; }
.caption .mx { margin-left: -1px; }
.vm-menu { height: 24px; display: flex; align-items: center; gap: 19px; padding-left: 15px; letter-spacing: -0.52px; background: linear-gradient(90deg, #f0f0f0, #fbfbfb); }
.desktop { height: 920px; position: relative; overflow: hidden; }
.vm-status { height: 24px; display: flex; align-items: center; justify-content: space-between; background: #f0f0f0; border-top: 1px solid #d7d7d7; padding: 0 1px 0 4px; letter-spacing: -0.36px; }
.vm-status > span { height: 18px; line-height: 18px; padding-right: 6px; border-right: 1px solid #a0a0a0; }
.vm-icons { display: flex; align-items: center; gap: 5px; }
.kbd { width: 16px; height: 10px; }
.mouse { width: 10px; height: 16px; margin-left: 1px; }
.lock { width: 12px; height: 15px; }
.grip { width: 12px; height: 12px; }
.vm-icons .grip { align-self: flex-end; margin-left: -2px; }

/* Monitor window in the first guest */
.monitor { display: flex; flex-direction: column; background: #fff; }
.mon-main { flex: 1; display: flex; background: linear-gradient(180deg, #fff 24px, #e2e2e2 24px, #e2e2e2 46px, #fff 46px, #909090 101px, #fff 101px, #fff 137px, #999 137px, #999 138px, #fff 138px); }
.mon-tree { width: 300px; border-right: 1px solid #a0a0a0; border-bottom: 1px solid #a0a0a0; border-left: 1px solid #a0a0a0; }
.mon-right { flex: 1; display: flex; flex-direction: column; border-left: 1px solid #f0f0f0; }
.mon-list { flex: 1; border-bottom: 1px solid #a0a0a0; }
.mon-find { height: 36px; background: #f0f0f0; padding: 8px 0 0 10px; }
.mon-status { height: 19px; display: flex; background: #f0f0f0; border-top: 1px solid #d7d7d7; padding-left: 9px; line-height: 20px; letter-spacing: -0.5px; white-space: nowrap; }
.mon-status span { border-right: 1px solid #d0d0d0; margin-right: 7px; }
.n1 { width: 71px; }
.n2 { width: 129px; }
.mon-status .n3 { border: 0; letter-spacing: -0.44px; }
.search { width: 194px; height: 20px; display: flex; align-items: center; justify-content: space-between; border: 1px solid #646464; background: #fff; color: #666; padding: 0 2px 2px 4px; letter-spacing: -0.3px; }
.search svg { width: 14px; height: 14px; }
.search.wide { width: 282px; padding-bottom: 0; }

/* Messenger window */
.app { position: absolute; width: 956px; height: 761px; border: 1px solid #1883d7; background: #f0f0f0; display: flex; flex-direction: column; }
.app-left { left: 0; top: 0; }
.app-right { left: 7px; top: 96px; }
.app-title { height: 30px; display: flex; align-items: center; gap: 5px; padding: 0 17px 0 8px; background: #fff; }
.app-name { white-space: nowrap; letter-spacing: -0.37px; }
.app-menu { height: 18px; display: flex; align-items: center; gap: 14px; padding: 2px 0 0 7px; background: #fff; letter-spacing: -0.4px; }
.toolbar { height: 50px; display: flex; border-top: 2px solid #f0f0f0; background: #fff; box-shadow: inset 0 1px 0 #a0a0a0; }
.tools { width: 738px; display: flex; margin-top: 1px; padding: 4px 0 0 1.500px; background: linear-gradient(180deg, #fff, #ececec); }
.find { flex: 1; margin: 1px 0 0 3px; padding: 14px 0 0 9px; background: linear-gradient(180deg, #fff, #ececec); }
.tool { width: 67px; display: flex; flex-direction: column; align-items: center; white-space: nowrap; letter-spacing: -0.53px; }
.tool svg { width: 24px; height: 24px; }
.tool.off { color: #a0a0a0; }
.tool.off span { padding-top: 1px; }
.tool-sep { width: 1px; height: 42px; background: #8c8c8c; margin: -1px 2.500px 0 2.500px; }
.panes { height: 641px; display: flex; gap: 4px; }
.col-left { width: 711px; display: flex; flex-direction: column; gap: 3px; }
.box { background: #fff; border: 1px solid; border-color: #a0a0a0 #fff #fff #a0a0a0; padding: 1px; box-shadow: inset 1px 1px 0 #696969, inset -1px -1px 0 #e3e3e3; overflow: hidden; }
.box h2 { height: 20px; flex: none; border-bottom: 1px solid #d8d8d8; font-size: 11.500px; line-height: 22px; font-weight: 700; padding-left: 8px; letter-spacing: -0.62px; }
.app-left h2 { font-family: "Liberation Sans", sans-serif; font-size: 13px; letter-spacing: 0.26px; line-height: 23px; }
.recipients { height: 212px; display: flex; flex-direction: column; }
.rc-head { height: 24px; display: flex; line-height: 24px; }
.rc-name { width: 202px; padding-left: 6px; font-size: 11.500px; font-weight: 700; letter-spacing: -0.68px; border-right: 1px solid #dcdcdc; position: relative; }
.caret { position: absolute; width: 8px; height: 5px; }
.rc-name .caret { left: 97px; top: 0; }
.rc-num { width: 30px; padding-left: 6px; border-right: 1px solid #dcdcdc; }
.rc-row { width: 232px; height: 19px; display: flex; background: linear-gradient(90deg, #fff 45px, #f0f0f0 45px); padding: 2px 0 0 5px; line-height: 16px; }
.chk { width: 13px; height: 13px; border: 1px solid #333; margin-right: 8px; }
.chk svg { width: 13px; height: 13px; margin: -1px; }
.rc-client { width: 161px; padding-left: 5px; }
.rc-flag { padding-left: 5px; }
.rc-fill { flex: 1; width: 202px; background: #f7f7f7; }
.log { height: 212px; }
.log p { font: 13.330px/16px "Liberation Sans", Arial, sans-serif; padding-left: 8.500px; letter-spacing: -0.13px; white-space: nowrap; }
.log h2 + p { margin-top: 2px; }
.log .start { font-weight: 700; color: #00f; letter-spacing: -0.05px; }
.log .in { color: #f00; }
.log .out { color: #00f; }
.message { height: 211px; }
.cursor { display: block; width: 1px; height: 16px; margin: 1px 0 0 9px; background: #000; }
.sessions { width: 239px; display: flex; flex-direction: column; }
.ss-head { height: 24px; flex: none; display: flex; line-height: 24px; letter-spacing: -0.65px; overflow: hidden; }
.ss-head span { border-right: 1px solid #dcdcdc; padding-left: 6px; flex: none; }
.ss-head .c0 { width: 30px; padding: 6px 0 0 2px; }
.c0 svg { width: 12px; height: 12px; }
.ss-head .c1 { width: 30px; position: relative; }
.c1 .caret { left: 12px; top: 0; }
.ss-head .c2 { width: 150px; }
.ss-head .c3 { width: 60px; }
.ss-list { flex: 1; background: linear-gradient(90deg, transparent 30px, #f7f7f7 30px, #f7f7f7 60px, transparent 60px); }
.ss-row { height: 19px; margin-left: 20px; display: grid; grid-template-columns: 30px 1fr; padding-left: 16px; line-height: 21px; letter-spacing: -0.33px; }
.ss-row.cur { background: #f0f0f0; }
.ss-row.sel { background: #0078d7; color: #fff; }
.hscroll { height: 15px; display: flex; align-items: center; background: #f0f0f0; padding: 0 4px; }
.hscroll svg { width: 8px; height: 10px; }
.thumb { width: 94px; height: 15px; background: #cdcdcd; margin-left: 5px; }
.hscroll .end { margin-left: auto; }
.pager { height: 29px; display: flex; gap: 2px; padding: 4px 0 0 5px; background: #f0f0f0; border-bottom: 1px solid #a0a0a0; }
.pg { width: 22px; height: 21px; border: 1px solid #adadad; background: #e1e1e1; padding: 1px 2px; }
.pg.dis { background: #ccc; border-color: #bfbfbf; }
.app-status { height: 20px; flex: none; display: flex; border-top: 1px solid #d7d7d7; padding-left: 5px; line-height: 21px; letter-spacing: -0.54px; }
.app-status span { white-space: nowrap; overflow: hidden; border-right: 1px solid #d4d4d4; height: 18px; }
.app-status .a1 { width: 158px; border: 0; }
.a2 { width: 298px; }
.a3 { width: 26px; }
.a4 { width: 302px; padding-left: 7px; }
.a5 { width: 146px; padding-left: 7px; }
.app-status .grip { margin: 7px 0 0 7px; }

/* Second guest desktop */
.wallpaper {
  background:
    linear-gradient(118deg, transparent 868px, rgba(0, 40, 84, .85) 925px, #002c58 1000px) 0 800px / 100% 120px no-repeat,
    radial-gradient(330px 80px at 750px 850px, rgba(0, 152, 255, .95), rgba(0, 150, 255, 0)),
    linear-gradient(90deg, #003468 0, #003f78 200px, #00509a 366px, #0068c2 440px, #0072d4 525px, #0076d8 740px, #0060b0 958px) 0 800px / 100% 120px no-repeat,
    linear-gradient(180deg, transparent 540px, #0058a6 640px, #0070cc 800px) 0 0 / 12px 100% no-repeat,
    radial-gradient(500px 200px at 400px 110px, #002c58, transparent),
    linear-gradient(90deg, #001c3e, #00234a 40%, #001834 80%, #00193a);
}
.bin { position: absolute; left: 3px; top: 9px; width: 72px; display: flex; flex-direction: column; align-items: center; color: #fff; text-shadow: 0 1px 2px #000; }
.bin svg { width: 38px; height: 43px; margin-bottom: 6px; }
.behind { position: absolute; left: 0; top: 123px; width: 8px; height: 516px; border-left: 1px solid #5a5a5a; background: linear-gradient(180deg, #fff 30px, #d9d9d9 30px, #d9d9d9 53px, #fff 53px, #eee 107px, #888 107px, #888 108px, #fff 108px, #fff 496px, #999 496px, #f0f0f0 498px); }
.watermark { position: absolute; right: 5px; top: 871px; text-align: right; line-height: 16.500px; color: #e4edf6; display: flex; flex-direction: column; white-space: nowrap; }
.w1 { letter-spacing: -0.45px; }
.w2 { letter-spacing: -0.52px; }
.w3 { letter-spacing: -0.59px; }

/* Taskbars */
.taskbar { height: 40px; flex: none; display: flex; background: #010409; color: #fff; }
.tb { width: 48px; display: flex; align-items: center; justify-content: center; }
.guest .tb.ie { width: 54px; }
.guest .tb.ex { width: 44px; margin-right: 7px; }
.guest .tb.run { width: 40px; border-bottom: 2px solid #76b9ed; margin-right: 5px; padding: 0 1px 0 0; }
.guest .tb.act { width: 48px; background: #353a41; border-bottom: 2px solid #76b9ed; box-shadow: inset -4px 0 0 #2a2e34; }
.tray { margin-left: auto; display: flex; align-items: center; gap: 8px; }
.viptray { width: 15px; height: 14px; margin: -3px 1px 0 0; }
.ov { position: relative; width: 16px; height: 16px; }
.badge { position: absolute; right: -1px; bottom: 0; width: 9px; height: 9px; }
.mute { position: absolute; left: 9px; top: 5px; width: 6px; height: 6px; }
.lang { margin-left: 2px; width: 24px; }
.clock { width: 64px; text-align: center; line-height: 18px; }
.nt { margin-left: 5px; }
.count { position: absolute; left: 7px; top: 7px; width: 17px; height: 17px; border: 1px solid #aaa; border-radius: 50%; background: #22262c; font-size: 11px; line-height: 14px; text-align: center; letter-spacing: 0; }
.peek { width: 1px; height: 40px; background: #555; margin: 0 4px 0 11px; }
.host { background: #070b12; }
.host .tray { padding-top: 1px; }
.tasks { display: flex; gap: 8.400px; margin-left: 7px; }
.task { width: 152px; display: flex; align-items: center; border-bottom: 2px solid #a9a9a9; padding: 2px 0 0 7px; gap: 5px; white-space: nowrap; }
.task svg { width: 22px; height: 22px; }
.task.hv { padding-left: 5px; }
.task.hv svg { width: 24px; height: 24px; }
.task.t-folder { padding-left: 9px; gap: 11px; }
.task.t-folder svg { width: 14px; height: 20px; }
.pin { width: 41.800px; display: flex; align-items: center; justify-content: center; }
.pin svg { width: 22px; height: 22px; }
```
